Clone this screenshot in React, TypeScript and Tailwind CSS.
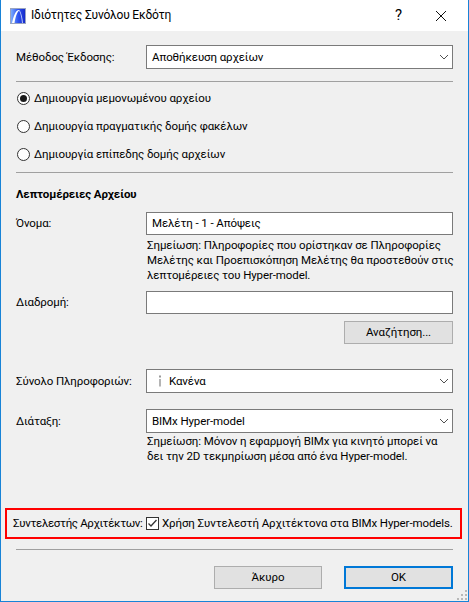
import React from "react";

const FONT = "font-['Roboto',sans-serif]";

function Chevron() {
  return (
    <svg width="10" height="6" viewBox="0 0 10 6" className="shrink-0">
      <path d="M1 1 L5 5 L9 1" stroke="#505050" strokeWidth="1" fill="none" />
    </svg>
  );
}

function Select({ children }: { children: React.ReactNode }) {
  return (
    <div className="flex-1 h-[24px] border border-[#7a7a7a] bg-white flex items-center pl-[5px] pr-[3px]">
      <div className="flex-1 flex items-center">{children}</div>
      <Chevron />
    </div>
  );
}

function Input({ children }: { children?: React.ReactNode }) {
  return (
    <div className="flex-1 h-[23px] border border-[#7a7a7a] bg-white flex items-center pl-[5px]">
      {children}
    </div>
  );
}

function Radio({ checked, label }: { checked?: boolean; label: string }) {
  return (
    <div className="h-[28px] flex items-center pl-[16px] gap-[4px]">
      <div className="w-[13px] h-[13px] rounded-full border border-[#333] bg-white flex items-center justify-center">
        {checked && <div className="w-[7px] h-[7px] rounded-full bg-[#1a1a1a]" />}
      </div>
      <span>{label}</span>
    </div>
  );
}

function Sep() {
  return <div className="mx-[15px] h-px bg-[#a0a0a0]" />;
}

export default function App() {
  return (
    <div
      className={`${FONT} relative w-[469px] h-[602px] border-x border-b border-[#1883d7] bg-[#f0f0f0] text-[11.5px] tracking-[-0.1px] text-black flex flex-col leading-[15px]`}
    >
      {/* Title bar */}
      <div className="h-[31px] bg-white flex items-center shrink-0">
        <svg width="16" height="16" viewBox="0 0 16 16" className="ml-[9px]">
          <defs>
            <linearGradient id="g" x1="0" y1="0" x2="1" y2="0">
              <stop offset="0" stopColor="#7fb0ff" />
              <stop offset="0.5" stopColor="#2f55f0" />
              <stop offset="1" stopColor="#1327c8" />
            </linearGradient>
          </defs>
          <rect x="0.5" y="0.5" width="15" height="15" fill="url(#g)" stroke="#9aa4c0" />
          <path d="M2 15 C3.5 9 5 3 8.5 2 L9.5 2 C7 4 5.5 9 4.5 15 Z" fill="#ffffff" />
          <path d="M9.5 2 C11.5 5 12.5 10 13 15 L12 15 C11.5 10 10.5 5 9 2.5 Z" fill="#dfe6ff" opacity="0.8" />
        </svg>
        <span className="ml-[5px] text-[12px] tracking-[-0.2px]">Ιδιότητες Συνόλου Εκδότη</span>
        <div className="flex-1" />
        <span className="text-[15px] mr-[33px]">?</span>
        <svg width="12" height="12" viewBox="0 0 12 12" className="mr-[21px]">
          <path d="M1 1 L11 11 M11 1 L1 11" stroke="#111" strokeWidth="1" />
        </svg>
      </div>

      {/* Method row */}
      <div className="mt-[14px] px-[15px] flex items-center">
        <div className="w-[130px]">Μέθοδος Έκδοσης:</div>
        <Select>Αποθήκευση αρχείων</Select>
      </div>

      <div className="mt-[12px]">
        <Sep />
      </div>

      <div className="mt-[2px]">
        <Radio checked label="Δημιουργία μεμονωμένου αρχείου" />
        <Radio label="Δημιουργία πραγματικής δομής φακέλων" />
        <Radio label="Δημιουργία επίπεδης δομής αρχείων" />
      </div>

      <div className="mt-[4px]">
        <Sep />
      </div>

      <div className="mt-[11px] px-[15px] h-[20px] flex items-center font-bold">
        Λεπτομέρειες Αρχείου
      </div>

      {/* Name */}
      <div className="mt-[8px] px-[15px] flex items-center">
        <div className="w-[130px]">Όνομα:</div>
        <Input>Μελέτη - 1 - Απόψεις</Input>
      </div>
      <div className="mt-[3px] pl-[146px] pr-[15px] leading-[15px] whitespace-nowrap">
        Σημείωση: Πληροφορίες που ορίστηκαν σε Πληροφορίες<br />
        Μελέτης και Προεπισκόπηση Μελέτης θα προστεθούν στις<br />
        λεπτομέρειες του Hyper-model.
      </div>

      {/* Path */}
      <div className="mt-[8px] px-[15px] flex items-center">
        <div className="w-[130px]">Διαδρομή:</div>
        <Input />
      </div>
      <div className="mt-[7px] px-[15px] flex justify-end">
        <div className="w-[109px] h-[23px] bg-[#e1e1e1] border border-[#adadad] flex items-center justify-center">
          Αναζήτηση...
        </div>
      </div>

      {/* Info set */}
      <div className="mt-[25px] px-[15px] flex items-center">
        <div className="w-[130px]">Σύνολο Πληροφοριών:</div>
        <Select>
          <svg width="4" height="12" viewBox="0 0 4 12" className="ml-[6px] mr-[7px]">
            <rect x="1" y="0.5" width="2" height="2" fill="#9a9a9a" />
            <rect x="1" y="4" width="2" height="7.5" fill="#b4b4b4" />
          </svg>
          Κανένα
        </Select>
      </div>

      {/* Layout */}
      <div className="mt-[16px] px-[15px] flex items-center">
        <div className="w-[130px]">Διάταξη:</div>
        <Select>BIMx Hyper-model</Select>
      </div>
      <div className="mt-[1px] pl-[146px] pr-[15px] leading-[15px] whitespace-nowrap">
        Σημείωση: Μόνον η εφαρμογή BIMx για κινητό μπορεί να<br />
        δει την 2D τεκμηρίωση μέσα από ένα Hyper-model.
      </div>

      {/* Red box */}
      <div className="mt-[44px] ml-[4px] mr-[6px] h-[31px] border-2 border-[#ff0000] flex items-center pl-[6px]">
        <div className="w-[133px] whitespace-nowrap tracking-[-0.35px]">Συντελεστής Αρχιτέκτων:</div>
        <div className="w-[13px] h-[13px] border border-[#333] bg-white flex items-center justify-center shrink-0">
          <svg width="11" height="11" viewBox="0 0 11 11">
            <path d="M1.5 5.5 L4 8 L9.5 2" stroke="#333" strokeWidth="1.3" fill="none" />
          </svg>
        </div>
        <span className="ml-[3px] whitespace-nowrap">Χρήση Συντελεστή Αρχιτέκτονα στα BIMx Hyper-models.</span>
      </div>

      <div className="mt-[10px]">
        <Sep />
      </div>

      {/* Buttons */}
      <div className="mt-[16px] px-[15px] flex justify-end gap-[22px]">
        <div className="w-[108px] h-[23px] bg-[#e1e1e1] border border-[#adadad] flex items-center justify-center">
          Άκυρο
        </div>
        <div className="w-[109px] h-[23px] bg-[#e1e1e1] border-2 border-[#0078d7] flex items-center justify-center">
          OK
        </div>
      </div>

      {/* Resize grip */}
      <svg width="10" height="10" viewBox="0 0 10 10" className="absolute right-[1px] bottom-[1px]">
        <rect x="8" y="0" width="2" height="2" fill="#b8b8b8" />
        <rect x="4" y="4" width="2" height="2" fill="#b8b8b8" />
        <rect x="8" y="4" width="2" height="2" fill="#b8b8b8" />
        <rect x="0" y="8" width="2" height="2" fill="#b8b8b8" />
        <rect x="4" y="8" width="2" height="2" fill="#b8b8b8" />
        <rect x="8" y="8" width="2" height="2" fill="#b8b8b8" />
      </svg>
    </div>
  );
}
